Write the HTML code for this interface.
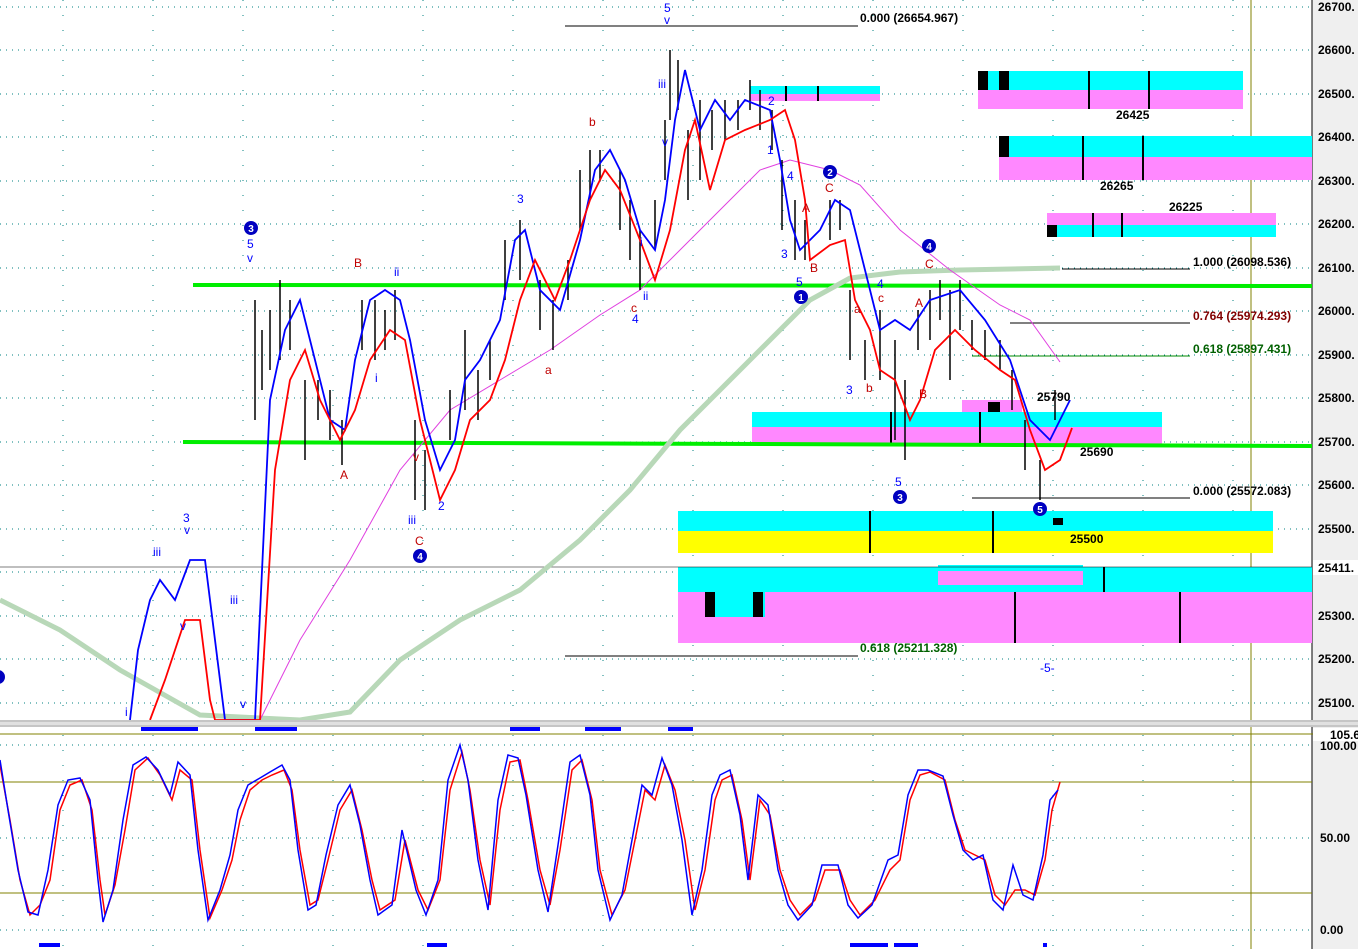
<!DOCTYPE html><html><head><style>body{margin:0;background:#fff}svg{display:block;font-family:"Liberation Sans",sans-serif}</style></head><body>
<svg width="1358" height="949" viewBox="0 0 1358 949" xmlns="http://www.w3.org/2000/svg">
<rect width="1358" height="949" fill="#fff"/>
<rect x="1312" y="0" width="46" height="949" fill="#efefef"/>
<line x1="1312" y1="0" x2="1312" y2="949" stroke="#000"/>
<g stroke="#008080" stroke-dasharray="1,5">
<line x1="0" y1="7" x2="1312" y2="7"/><line x1="0" y1="50" x2="1312" y2="50"/><line x1="0" y1="94" x2="1312" y2="94"/><line x1="0" y1="137" x2="1312" y2="137"/><line x1="0" y1="181" x2="1312" y2="181"/><line x1="0" y1="224" x2="1312" y2="224"/><line x1="0" y1="268" x2="1312" y2="268"/><line x1="0" y1="311" x2="1312" y2="311"/><line x1="0" y1="355" x2="1312" y2="355"/><line x1="0" y1="398" x2="1312" y2="398"/><line x1="0" y1="442" x2="1312" y2="442"/><line x1="0" y1="485" x2="1312" y2="485"/><line x1="0" y1="529" x2="1312" y2="529"/><line x1="0" y1="572" x2="1312" y2="572"/><line x1="0" y1="616" x2="1312" y2="616"/><line x1="0" y1="659" x2="1312" y2="659"/><line x1="0" y1="703" x2="1312" y2="703"/>
<line x1="0" y1="745" x2="1312" y2="745"/><line x1="0" y1="838" x2="1312" y2="838"/><line x1="0" y1="930" x2="1312" y2="930"/>
</g>
<g stroke="#008080" stroke-dasharray="1,14">
<line x1="63" y1="0" x2="63" y2="949"/><line x1="153" y1="0" x2="153" y2="949"/><line x1="243" y1="0" x2="243" y2="949"/><line x1="333" y1="0" x2="333" y2="949"/><line x1="423" y1="0" x2="423" y2="949"/><line x1="513" y1="0" x2="513" y2="949"/><line x1="603" y1="0" x2="603" y2="949"/><line x1="693" y1="0" x2="693" y2="949"/><line x1="783" y1="0" x2="783" y2="949"/><line x1="873" y1="0" x2="873" y2="949"/><line x1="963" y1="0" x2="963" y2="949"/><line x1="1053" y1="0" x2="1053" y2="949"/><line x1="1143" y1="0" x2="1143" y2="949"/><line x1="1233" y1="0" x2="1233" y2="949"/>
</g>
<line x1="1251" y1="0" x2="1251" y2="949" stroke="#808000"/>
<rect x="978" y="71" width="265" height="19" fill="#0ff"/><rect x="978" y="90" width="265" height="19" fill="#f8f"/>
<rect x="999" y="136" width="313" height="21" fill="#0ff"/><rect x="999" y="157" width="313" height="23" fill="#f8f"/>
<rect x="1047" y="213" width="229" height="12" fill="#f8f"/><rect x="1047" y="225" width="229" height="12" fill="#0ff"/>
<rect x="750" y="86" width="130" height="8" fill="#0ff"/><rect x="750" y="94" width="130" height="7" fill="#f8f"/>
<rect x="752" y="412" width="410" height="15" fill="#0ff"/><rect x="752" y="427" width="410" height="17" fill="#f8f"/>
<rect x="678" y="511" width="595" height="20" fill="#0ff"/><rect x="678" y="531" width="595" height="22" fill="#ff0"/>
<rect x="678" y="567" width="634" height="25" fill="#0ff"/><rect x="678" y="592" width="634" height="25" fill="#f8f"/><rect x="678" y="617" width="634" height="26" fill="#f8f"/><rect x="705" y="592" width="60" height="25" fill="#0ff"/>
<rect x="938" y="565" width="145" height="20" fill="#f8f"/><rect x="938" y="565" width="145" height="6" fill="#0ff"/>
<rect x="962" y="400" width="60" height="12" fill="#f8f"/>
<g fill="#000"><rect x="978" y="71" width="10" height="19"/><rect x="999" y="71" width="10" height="19"/><rect x="999" y="136" width="10" height="21"/><rect x="1047" y="225" width="10" height="12"/><rect x="705" y="592" width="10" height="25"/><rect x="753" y="592" width="10" height="25"/><rect x="988" y="402" width="12" height="10"/><rect x="1053" y="518" width="10" height="7"/></g>
<g stroke="#000" stroke-width="2"><line x1="1089" y1="71" x2="1089" y2="109"/><line x1="1149" y1="71" x2="1149" y2="109"/><line x1="1083" y1="136" x2="1083" y2="180"/><line x1="1143" y1="136" x2="1143" y2="180"/><line x1="1093" y1="213" x2="1093" y2="237"/><line x1="1122" y1="213" x2="1122" y2="237"/><line x1="870" y1="511" x2="870" y2="553"/><line x1="993" y1="511" x2="993" y2="553"/><line x1="1015" y1="592" x2="1015" y2="643"/><line x1="1180" y1="592" x2="1180" y2="643"/><line x1="1104" y1="567" x2="1104" y2="592"/><line x1="891" y1="412" x2="891" y2="444"/><line x1="980" y1="412" x2="980" y2="444"/><line x1="818" y1="86" x2="818" y2="101"/><line x1="786" y1="86" x2="786" y2="101"/></g>
<g stroke="#000" stroke-width="1"><line x1="565" y1="26" x2="858" y2="26"/><line x1="1062" y1="269" x2="1190" y2="269"/><line x1="1010" y1="323" x2="1190" y2="323"/><line x1="972" y1="498" x2="1190" y2="498"/><line x1="565" y1="656" x2="858" y2="656"/></g>
<line x1="972" y1="356" x2="1190" y2="356" stroke="#080"/>
<line x1="0" y1="567" x2="1312" y2="567" stroke="#000" stroke-width="0.6"/>
<line x1="193" y1="285" x2="1312" y2="286" stroke="#0e0" stroke-width="4"/>
<line x1="183" y1="442" x2="1312" y2="446" stroke="#0e0" stroke-width="4"/>
<polyline fill="none" stroke="#b8d8b8" stroke-width="5" points="0,600 60,630 120,670 200,715 300,720 350,712 400,660 460,620 520,590 580,540 630,490 680,430 720,390 770,340 810,300 850,278 900,272 960,270 1060,268"/>
<polyline fill="none" stroke="#e040e0" stroke-width="1" points="260,720 300,640 350,560 400,470 450,410 500,380 550,350 600,315 640,290 680,250 720,210 760,170 790,160 830,170 860,185 900,230 950,270 1000,305 1030,320 1060,362"/>
<g stroke="#000" stroke-width="1.5">
<line x1="255" y1="300" x2="255" y2="420"/><line x1="262" y1="330" x2="262" y2="390"/><line x1="270" y1="310" x2="270" y2="370"/><line x1="280" y1="280" x2="280" y2="360"/><line x1="290" y1="300" x2="290" y2="350"/><line x1="305" y1="380" x2="305" y2="460"/><line x1="318" y1="380" x2="318" y2="420"/><line x1="330" y1="390" x2="330" y2="440"/><line x1="342" y1="420" x2="342" y2="465"/><line x1="362" y1="300" x2="362" y2="350"/><line x1="375" y1="300" x2="375" y2="360"/><line x1="385" y1="310" x2="385" y2="350"/><line x1="395" y1="290" x2="395" y2="340"/><line x1="415" y1="420" x2="415" y2="500"/><line x1="425" y1="450" x2="425" y2="510"/><line x1="450" y1="390" x2="450" y2="440"/><line x1="465" y1="330" x2="465" y2="410"/><line x1="478" y1="370" x2="478" y2="420"/><line x1="490" y1="340" x2="490" y2="380"/><line x1="505" y1="240" x2="505" y2="300"/><line x1="520" y1="220" x2="520" y2="280"/><line x1="540" y1="280" x2="540" y2="330"/><line x1="553" y1="300" x2="553" y2="350"/><line x1="568" y1="260" x2="568" y2="300"/><line x1="580" y1="170" x2="580" y2="230"/><line x1="590" y1="150" x2="590" y2="200"/><line x1="600" y1="150" x2="600" y2="180"/><line x1="620" y1="170" x2="620" y2="230"/><line x1="630" y1="200" x2="630" y2="260"/><line x1="640" y1="230" x2="640" y2="290"/><line x1="655" y1="200" x2="655" y2="250"/><line x1="665" y1="120" x2="665" y2="180"/><line x1="670" y1="50" x2="670" y2="120"/><line x1="678" y1="60" x2="678" y2="110"/><line x1="688" y1="130" x2="688" y2="200"/><line x1="700" y1="100" x2="700" y2="180"/><line x1="712" y1="110" x2="712" y2="150"/><line x1="725" y1="100" x2="725" y2="140"/><line x1="738" y1="100" x2="738" y2="130"/><line x1="750" y1="80" x2="750" y2="110"/><line x1="760" y1="90" x2="760" y2="130"/><line x1="772" y1="110" x2="772" y2="150"/><line x1="782" y1="160" x2="782" y2="230"/><line x1="795" y1="200" x2="795" y2="260"/><line x1="805" y1="220" x2="805" y2="260"/><line x1="830" y1="200" x2="830" y2="240"/><line x1="840" y1="200" x2="840" y2="230"/><line x1="850" y1="290" x2="850" y2="360"/><line x1="865" y1="340" x2="865" y2="380"/><line x1="880" y1="310" x2="880" y2="380"/><line x1="895" y1="340" x2="895" y2="440"/><line x1="905" y1="380" x2="905" y2="460"/><line x1="918" y1="310" x2="918" y2="350"/><line x1="930" y1="290" x2="930" y2="340"/><line x1="940" y1="280" x2="940" y2="320"/><line x1="950" y1="290" x2="950" y2="380"/><line x1="960" y1="280" x2="960" y2="330"/><line x1="972" y1="320" x2="972" y2="350"/><line x1="985" y1="330" x2="985" y2="360"/><line x1="1000" y1="340" x2="1000" y2="370"/><line x1="1012" y1="370" x2="1012" y2="410"/><line x1="1025" y1="420" x2="1025" y2="470"/><line x1="1040" y1="460" x2="1040" y2="500"/><line x1="1055" y1="390" x2="1055" y2="420"/>
</g>
<polyline fill="none" stroke="#00f" stroke-width="1.8" points="130,720 138,650 150,600 160,580 175,600 190,560 205,560 215,640 225,720 255,720 270,400 285,330 300,300 315,360 330,420 345,430 355,360 370,300 385,290 400,300 410,340 425,420 440,470 455,440 465,380 480,360 500,320 515,240 525,230 540,290 560,310 580,240 595,170 610,150 625,180 640,230 655,250 665,200 675,120 685,70 700,130 715,100 730,120 745,100 770,110 780,160 790,220 800,250 820,230 835,200 850,210 865,270 880,330 895,320 910,330 930,300 960,290 985,320 1010,360 1030,420 1050,440 1070,400"/>
<polyline fill="none" stroke="#f00" stroke-width="1.8" points="150,720 165,680 185,620 200,620 210,700 215,720 260,720 275,470 290,380 305,350 320,400 340,440 355,410 370,360 390,330 405,340 420,420 440,500 455,470 470,420 490,400 505,360 520,300 535,260 555,300 570,260 590,200 605,170 620,190 640,240 655,280 670,230 685,150 695,120 710,190 725,140 745,130 770,120 785,110 795,140 805,200 810,260 830,245 845,240 855,300 870,330 880,370 895,380 910,420 920,400 935,350 955,330 975,350 1000,370 1015,380 1030,430 1045,470 1060,460 1072,428"/>
<g font-size="12" font-weight="bold">
<text x="860" y="22">0.000 (26654.967)</text>
<text x="1193" y="266">1.000 (26098.536)</text>
<text x="1193" y="320" fill="#800000">0.764 (25974.293)</text>
<text x="1193" y="353" fill="#006000">0.618 (25897.431)</text>
<text x="1193" y="495">0.000 (25572.083)</text>
<text x="860" y="652" fill="#006000">0.618 (25211.328)</text>
<text x="1116" y="119">26425</text><text x="1100" y="190">26265</text><text x="1169" y="211">26225</text>
<text x="1037" y="401">25790</text><text x="1080" y="456">25690</text><text x="1070" y="543">25500</text>
</g>
<g font-size="12" fill="#00f">
<text x="664" y="12">5</text><text x="664" y="24">v</text><text x="247" y="248">5</text><text x="247" y="262">v</text><text x="394" y="276">ii</text><text x="517" y="203">3</text><text x="658" y="88">iii</text><text x="662" y="146">v</text><text x="640" y="246">i</text><text x="643" y="300">ii</text><text x="632" y="323">4</text><text x="767" y="154">1</text><text x="787" y="180">4</text><text x="781" y="258">3</text><text x="796" y="286">5</text><text x="877" y="288">4</text><text x="846" y="394">3</text><text x="895" y="486">5</text><text x="183" y="522">3</text><text x="184" y="534">v</text><text x="153" y="556">iii</text><text x="230" y="604">iii</text><text x="125" y="716">i</text><text x="375" y="382">i</text><text x="438" y="510">2</text><text x="408" y="524">iii</text><text x="1040" y="672">-5-</text><text x="180" y="630">v</text><text x="240" y="708">v</text><text x="768" y="105">2</text>
</g>
<g font-size="12" fill="#c00000">
<text x="354" y="267">B</text><text x="340" y="479">A</text><text x="589" y="126">b</text><text x="545" y="374">a</text><text x="631" y="312">c</text><text x="825" y="192">C</text><text x="802" y="212">A</text><text x="810" y="272">B</text><text x="854" y="313">a</text><text x="866" y="392">b</text><text x="878" y="302">c</text><text x="925" y="268">C</text><text x="915" y="307">A</text><text x="919" y="398">B</text><text x="415" y="545">C</text><text x="413" y="461">v</text>
</g>
<g fill="#0000c0"><circle cx="251" cy="228" r="7"/><circle cx="420" cy="556" r="7"/><circle cx="801" cy="297" r="7"/><circle cx="830" cy="172" r="7"/><circle cx="929" cy="246" r="7"/><circle cx="900" cy="497" r="7"/><circle cx="1040" cy="509" r="7"/><circle cx="-2" cy="677" r="7"/></g>
<g fill="#fff" font-size="10" font-weight="bold" text-anchor="middle"><text x="251" y="232">3</text><text x="420" y="560">4</text><text x="801" y="301">1</text><text x="830" y="176">2</text><text x="929" y="250">4</text><text x="900" y="501">3</text><text x="1040" y="513">5</text></g>
<g font-size="12" font-weight="bold">
<text x="1318" y="11">26700.</text><text x="1318" y="54">26600.</text><text x="1318" y="98">26500.</text><text x="1318" y="141">26400.</text><text x="1318" y="185">26300.</text><text x="1318" y="228">26200.</text><text x="1318" y="272">26100.</text><text x="1318" y="315">26000.</text><text x="1318" y="359">25900.</text><text x="1318" y="402">25800.</text><text x="1318" y="446">25700.</text><text x="1318" y="489">25600.</text><text x="1318" y="533">25500.</text><text x="1318" y="620">25300.</text><text x="1318" y="663">25200.</text><text x="1318" y="707">25100.</text>
</g>
<rect x="1313" y="560" width="45" height="15" fill="#fff"/><text x="1318" y="572" font-size="12" font-weight="bold">25411.</text>
<rect x="0" y="720" width="1358" height="7" fill="#e0e0e0"/><line x1="0" y1="721" x2="1358" y2="721" stroke="#aaa"/><line x1="0" y1="726" x2="1358" y2="726" stroke="#aaa"/>
<rect x="1313" y="727" width="45" height="222" fill="#efefef"/>
<g fill="#00f"><rect x="141" y="727" width="57" height="4"/><rect x="255" y="727" width="42" height="4"/><rect x="510" y="727" width="30" height="4"/><rect x="585" y="727" width="36" height="4"/><rect x="668" y="727" width="25" height="4"/><rect x="39" y="943" width="21" height="4"/><rect x="427" y="943" width="20" height="4"/><rect x="850" y="943" width="38" height="4"/><rect x="894" y="943" width="24" height="4"/><rect x="1043" y="943" width="4" height="4"/></g>
<g stroke="#808000"><line x1="0" y1="734" x2="1358" y2="734"/><line x1="0" y1="782" x2="1312" y2="782"/><line x1="0" y1="893" x2="1312" y2="893"/></g>
<rect x="1313" y="728" width="45" height="13" fill="#fff"/>
<g font-size="12" font-weight="bold"><text x="1330" y="739">105.6</text><text x="1320" y="750">100.00</text><text x="1320" y="842">50.00</text><text x="1320" y="934">0.00</text></g>
<polyline fill="none" stroke="#f00" stroke-width="1.5" points="0,765 10,820 20,880 30,915 40,905 50,880 60,810 70,785 82,780 92,810 100,880 105,915 115,885 125,830 135,770 148,758 160,775 172,800 180,770 192,780 200,850 210,918 222,890 232,860 240,820 250,790 262,780 272,775 284,770 292,790 300,850 310,905 318,900 328,860 340,810 352,790 362,830 372,880 380,910 395,900 405,840 418,890 428,910 440,880 450,790 462,752 470,790 480,860 490,905 500,810 510,762 520,760 528,800 540,870 550,905 560,850 572,770 582,760 592,800 600,870 612,915 625,890 635,840 645,790 655,800 665,765 675,790 685,840 695,910 705,870 715,800 722,780 732,775 742,820 750,880 760,800 770,815 780,870 790,900 800,915 815,900 825,870 840,870 850,900 860,915 875,900 890,870 900,860 910,800 920,775 930,772 945,780 955,820 965,850 975,855 985,860 995,895 1005,905 1015,890 1025,890 1035,895 1045,860 1052,810 1060,782"/>
<polyline fill="none" stroke="#00f" stroke-width="1.5" points="0,760 8,810 18,870 28,912 38,915 48,870 58,805 68,780 80,778 90,800 98,880 103,922 113,890 123,820 133,765 146,757 158,770 170,795 178,762 190,775 198,850 208,920 220,890 230,855 238,810 248,785 260,778 270,772 282,765 290,780 298,850 308,910 316,905 326,855 338,805 350,785 360,825 370,880 378,915 392,905 402,830 416,890 426,915 438,880 448,780 460,745 468,780 478,860 488,910 498,800 508,755 518,758 526,795 538,870 548,912 558,845 570,762 580,755 590,795 598,870 610,920 622,895 632,840 642,785 652,795 662,758 672,785 682,840 692,915 702,870 712,795 720,775 730,770 740,815 748,880 758,795 768,805 778,870 788,905 798,920 812,905 822,865 838,865 848,905 858,918 872,905 888,860 898,855 908,795 918,770 928,770 943,776 953,815 963,850 973,860 983,855 993,900 1003,910 1013,865 1023,895 1033,900 1043,855 1050,800 1058,790"/>
</svg>
</body></html>
